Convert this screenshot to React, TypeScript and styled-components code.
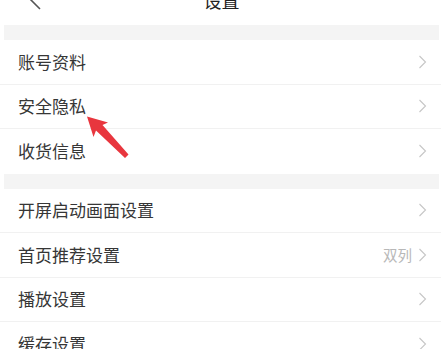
import React from 'react';
import styled, { createGlobalStyle } from 'styled-components';

const GlobalStyle = createGlobalStyle`
  html, body {
    margin: 0;
    padding: 0;
    background: #ffffff;
  }
  body {
    font-family: "Noto Sans CJK SC", "Noto Sans", sans-serif;
    overflow: hidden;
  }
`;

const Page = styled.div`
  position: relative;
  width: 441px;
  height: 349px;
  overflow: hidden;
  background: #ffffff;
`;

const Header = styled.div`
  height: 50px;
  margin-top: -25px;
  display: flex;
  align-items: center;
  justify-content: center;
  position: relative;
`;

const BackButton = styled.div`
  position: absolute;
  left: 29px;
  top: 15px;
  width: 14px;
  height: 20px;
  display: flex;
`;

const Title = styled.div`
  font-size: 18px;
  color: #222222;
  line-height: 1;
  margin-left: 2px;
`;

const Spacer = styled.div`
  height: 15px;
  margin: 0 2px 0 4px;
  background: #f4f4f4;
`;

const Group = styled.div`
  display: flex;
  flex-direction: column;
`;

const Row = styled.div`
  height: 44.5px;
  box-sizing: border-box;
  display: flex;
  align-items: center;
  justify-content: space-between;
  padding: 0 14px 0 18px;
  border-bottom: 1px solid #f1f1f1;
  &:last-child {
    border-bottom: none;
  }
`;

const Label = styled.span`
  font-size: 17px;
  color: #363636;
  margin-top: -1px;
`;

const Trailing = styled.div`
  display: flex;
  align-items: center;
  gap: 6px;
`;

const Value = styled.span`
  font-size: 14.5px;
  color: #b8b8b8;
`;

const Overlay = styled.svg`
  position: absolute;
  left: 0;
  top: 0;
  pointer-events: none;
`;

const Chevron = () => (
  <svg width="9" height="14" viewBox="0 0 9 14">
    <path d="M1.5 1 L7.5 7 L1.5 13" fill="none" stroke="#c6c6c6" strokeWidth="1.1" />
  </svg>
);

type Item = { label: string; value?: string };

const groups: Item[][] = [
  [{ label: '账号资料' }, { label: '安全隐私' }, { label: '收货信息' }],
  [
    { label: '开屏启动画面设置' },
    { label: '首页推荐设置', value: '双列' },
    { label: '播放设置' },
    { label: '缓存设置' },
  ],
];

const App: React.FC = () => {
  return (
    <Page>
      <GlobalStyle />
      <Header>
        <BackButton>
          <svg width="14" height="20" viewBox="0 0 14 20">
            <path d="M11 1 L2 10 L11 19" fill="none" stroke="#555555" strokeWidth="1.6" />
          </svg>
        </BackButton>
        <Title>设置</Title>
      </Header>
      {groups.map((items, gi) => (
        <React.Fragment key={gi}>
          <Spacer />
          <Group>
            {items.map((item) => (
              <Row key={item.label}>
                <Label>{item.label}</Label>
                <Trailing>
                  {item.value && <Value>{item.value}</Value>}
                  <Chevron />
                </Trailing>
              </Row>
            ))}
          </Group>
        </React.Fragment>
      ))}
      <Overlay width="441" height="349" viewBox="0 0 441 349">
        <polygon
          points="87,116.5 108,122.5 102.5,125 128.5,154.5 125,158 96,130.5 93.5,137"
          fill="#e8363e"
        />
      </Overlay>
    </Page>
  );
};

export default App;
